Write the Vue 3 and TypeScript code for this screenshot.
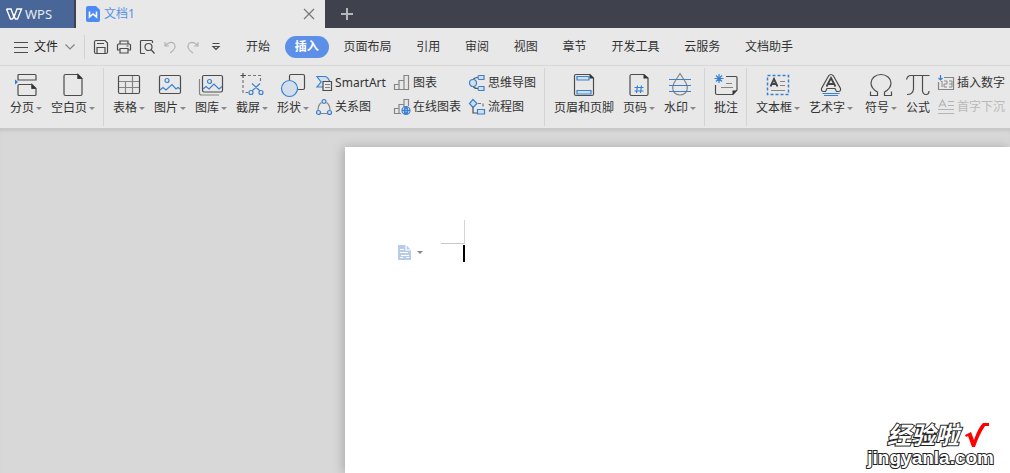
<script setup lang="ts">
import { ref } from 'vue'

interface Tool {
  id: string
  label: string
  menu?: boolean
}

const menus: string[] = ['开始', '插入', '页面布局', '引用', '审阅', '视图', '章节', '开发工具', '云服务', '文档助手']
const active = ref('插入')

const groups: { id: string; before: Tool[]; small?: Tool[][] }[] = [
  {
    id: 'pages',
    before: [
      { id: 'break', label: '分页', menu: true },
      { id: 'blank', label: '空白页', menu: true },
    ],
  },
  {
    id: 'media',
    before: [
      { id: 'table', label: '表格', menu: true },
      { id: 'picture', label: '图片', menu: true },
      { id: 'gallery', label: '图库', menu: true },
      { id: 'capture', label: '截屏', menu: true },
      { id: 'shape', label: '形状', menu: true },
    ],
    small: [
      [{ id: 'smartart', label: 'SmartArt' }, { id: 'relation', label: '关系图' }],
      [{ id: 'chart', label: '图表' }, { id: 'webchart', label: '在线图表' }],
      [{ id: 'mind', label: '思维导图' }, { id: 'flow', label: '流程图' }],
    ],
  },
  {
    id: 'header',
    before: [
      { id: 'header', label: '页眉和页脚' },
      { id: 'number', label: '页码', menu: true },
      { id: 'watermark', label: '水印', menu: true },
    ],
  },
  { id: 'comment', before: [{ id: 'comment', label: '批注' }] },
  {
    id: 'text',
    before: [
      { id: 'textbox', label: '文本框', menu: true },
      { id: 'wordart', label: '艺术字', menu: true },
      { id: 'symbol', label: '符号', menu: true },
      { id: 'formula', label: '公式' },
    ],
    small: [[{ id: 'insertnum', label: '插入数字' }, { id: 'dropcap', label: '首字下沉' }]],
  },
]

/* g: dark outline, n: light outline, b: blue outline, d: dark fill, f: blue fill, t: tinted shape */
type Part = [kind: string, d: string]
const glyphs: Record<string, Part[]> = {
  break: [
    ['g', 'M5 1.5H21Q22 1.5 22 2.5V7H4V2.5Q4 1.5 5 1.5ZM17.5 11.5H5Q4 11.5 4 12.5V21.5Q4 22.5 5 22.5H21Q22 22.5 22 21.5V15.5L18 11.5V15.5H22'],
    ['d', 'M17.5 11L22.5 15.5H17.5Z'],
    ['f', 'M1 6.5L4 9L1 11.5Z'],
  ],
  blank: [
    ['g', 'M16.5 1.5H4.5Q3 1.5 3 3V21Q3 22.5 4.5 22.5H19.5Q21 22.5 21 21V5.5L17 1.5V5.5H21'],
    ['d', 'M16.5 1L21.5 5.5H16.5Z'],
  ],
  table: [
    ['n', 'M1.5 8.5H22.5M1.5 14.5H22.5M8.5 8.5V20.5M15.5 2.5V20.5'],
    ['g', 'M3 2.5H21Q22.5 2.5 22.5 4V19Q22.5 20.5 21 20.5H3Q1.5 20.5 1.5 19V4Q1.5 2.5 3 2.5Z'],
  ],
  picture: [
    ['g', 'M3 2.5H21Q22.5 2.5 22.5 4V19Q22.5 20.5 21 20.5H3Q1.5 20.5 1.5 19V4Q1.5 2.5 3 2.5Z'],
    ['b', 'M2 17L5 14.5L8 17L14 11.5L18 16L20 14.5L22 16M9 5.5A2 2 0 1 1 9 9.5A2 2 0 1 1 9 5.5'],
  ],
  gallery: [
    ['n', 'M0.5 6V20Q0.5 22 2.5 22H20'],
    ['g', 'M5 2.5H22Q23.5 2.5 23.5 4V17Q23.5 19 22 19H5Q3.5 19 3.5 17V4Q3.5 2.5 5 2.5Z'],
    ['b', 'M4 16L7 13.5L10 16L15 11L20 16L23 13.5M10.5 6.5A2 2 0 1 1 10.5 10.5A2 2 0 1 1 10.5 6.5'],
  ],
  capture: [
    ['g', 'M0.5 2.5H6M3 0V5'],
    ['dash', 'M8 2.5H20.5V9M3 7V19.5H8'],
    ['b', 'M12 10.5L20 18M20 10.5L12 18M11 17.5A2 2 0 1 1 11 21.5A2 2 0 1 1 11 17.5M21 17.5A2 2 0 1 1 21 21.5A2 2 0 1 1 21 17.5'],
  ],
  shape: [
    ['g', 'M8.5 7V3Q8.5 1.5 10 1.5H22Q23.5 1.5 23.5 3V15Q23.5 16.500 22 16.5H17'],
    ['t', 'M8.5 7.5A8 8 0 1 1 8.5 23.5A8 8 0 1 1 8.5 7.5'],
  ],
  header: [
    ['g', 'M18 1.5H4Q2.5 1.5 2.5 3V21Q2.5 22.5 4 22.5H20Q21.5 22.5 21.5 21V5Z'],
    ['d', 'M17.5 1L22 5.5H17.5Z'],
    ['t', 'M5 3.5H17V7H5ZM5 17.5H19V21H5Z'],
  ],
  number: [
    ['g', 'M17 1.5H4.5Q3 1.5 3 3V21Q3 22.5 4.5 22.5H19.5Q21 22.5 21 21V5Z'],
    ['d', 'M16.5 1L21.5 5.5H16.5Z'],
    ['b', 'M7.5 14.5H16.5M7.5 18H16.5M10.5 12.5L9.5 20M14.5 12.5L13.5 20'],
  ],
  watermark: [
    ['n', 'M12 0.5L18 10Q20 14 19 17Q17 22 12 22Q7 22 5 17Q4 14 6 10Z'],
    ['b', 'M1 6.5H23M1 12.5H23M1 18.5H23'],
  ],
  comment: [
    ['n', 'M12 10.5H18M7 14.5H19'],
    ['g', 'M12 3.5H22Q23 3.5 23 4.5V17L19 21.5H3Q1.5 21.5 1.5 20V12'],
    ['d', 'M18.5 22V17.5H23Z'],
    ['b', 'M5 1V10M0.5 5.5H9.5M2 2.5L8 8.5M8 2.5L2 8.5'],
  ],
  textbox: [
    ['bdash', 'M1.5 2.5H22.5V21.5H1.5Z'],
    ['bold', 'M4.5 13.5L8 6L11.5 13.5M6 11H10'],
    ['n', 'M14 8.5H19M14 12.5H19M5 17.5H19'],
  ],
  wordart: [
    ['g', 'M9.5 3Q12 0 14.5 3L21.5 15.5Q22 18.5 19.5 18.5H17.5L16 15.5H8L6.5 18.5H4.5Q2 18.5 2.5 15.5Z'],
    ['bold', 'M7.5 13.5L12 5L16.5 13.5M9.5 11H14.5'],
    ['b', 'M3.5 20.5H20.5M5 22.5H19'],
  ],
  symbol: [['g', 'M1.5 18.5V22.5H8.5V19Q2 15.5 2 10A10 8.5 0 0 1 22 10Q22 15.5 15.5 19V22.5H22.5V18.5']],
  formula: [['g', 'M0.5 6.5Q1.5 2.5 5 2.5H23.5M7.5 2.5V16Q7 21.5 1 21.5M16.5 2.5V18Q17 21.5 20 21.5Q23 21.5 23 18']],
  smartart: [
    ['t', 'M1 1.5H9Q12 2 13.5 6L8 10V12H1L5 7Z'],
    ['paper', 'M7 6.5H15.5V15.5H7Z'],
    ['n', 'M9 9.5H14M9 12.5H14'],
  ],
  relation: [
    ['n', 'M5.5 3.5Q2 6 2 11M10.5 3.5Q14 6 14 11M5 14.5H11'],
    ['t', 'M8 0.5A2 2 0 1 1 8 4.5A2 2 0 1 1 8 0.5M2.5 11.5A2 2 0 1 1 2.5 15.5A2 2 0 1 1 2.5 11.5M13.5 11.5A2 2 0 1 1 13.5 15.5A2 2 0 1 1 13.5 11.5'],
  ],
  chart: [['n', 'M0.5 9.5H5V14.5H0.5ZM5 5.5H10V14.5H5ZM10 0.5H14.5V14.5H10Z']],
  webchart: [
    ['n', 'M7 14.5H0.5V9.5H5V14.5M5 9V5.5H10V8M10 5V0.5H14.5V7'],
    ['b', 'M12 7.5A4 4 0 1 1 12 15.5A4 4 0 1 1 12 7.5M8 11.5H16M12 7.5V15.5M12 7.5Q8 11.5 12 15.5M12 7.5Q16 11.5 12 15.5'],
  ],
  mind: [
    ['g', 'M4 5Q5 2.5 9 2.5M4 11Q5 13.5 9 13.5'],
    ['t', 'M4 4.5A3.5 3.5 0 1 1 4 11.5A3.5 3.5 0 1 1 4 4.5M10 0.5H15V4.5H10Q9 4.5 9 2.5Q9 0.5 10 0.5M10 11.5H15V15.5H10Q9 15.5 9 13.5Q9 11.5 10 11.5'],
  ],
  flow: [
    ['dash', 'M9 4.5H14V9'],
    ['g', 'M4 8V14H8'],
    ['t', 'M4 0.5L8 4.5L4 8.5L0.5 4.5ZM8.5 10.5H15.5V15H8.5Z'],
  ],
  insertnum: [
    ['n', 'M6 2.5H15.5V14.5H0.5V7'],
    ['thin', 'M3 7L4 6V12M6 6H9V9H6V12H9M11 6H14V12H11M11 9H14'],
    ['b', 'M2.5 0V5M0.5 3L2.5 5L4.5 3'],
  ],
  dropcap: [['faint', 'M1 8L4.5 1L8 8M2 6H7M10 2.5H16M10 6.5H16M0 10.5H16M0 14.5H16']],
}

const quick: { label: string; cls: string; d: string }[] = [
  { label: '保存', cls: 'g', d: 'M3 1.5H12L14.5 4V13Q14.5 14.5 13 14.5H3Q1.5 14.5 1.5 13V3Q1.5 1.5 3 1.5ZM4 4.5H11M4 14V8.5H12V14' },
  { label: '打印', cls: 'g', d: 'M4 5V2H12V5M4 11H1.5V6Q1.5 5 2.5 5H13.5Q14.5 5 14.5 6V11H12M4 9.5H12V14H4ZM10.5 7H12.5' },
  { label: '打印预览', cls: 'g', d: 'M6 14.5H2.5Q1.5 14.5 1.5 13.5V2.5Q1.5 1.5 2.5 1.5H12.5Q13.5 1.5 13.5 2.5V4M9.5 4.5A3.5 3.5 0 1 1 9.5 11.5A3.5 3.5 0 1 1 9.5 4.5M12 10.5L15.5 14.5' },
  { label: '撤销', cls: 'off', d: 'M3 3V7H7M3 7Q8 1.5 12 4.5Q15.5 9 8 14' },
  { label: '恢复', cls: 'off', d: 'M13 3V7H9M13 7Q8 1.5 4 4.5Q0.5 9 8 14' },
  { label: '更多', cls: 'g', d: 'M4.5 4.5H11.5M5 7.5L8 10.5L11 7.5Z' },
]
</script>

<template>
  <div class="app">
    <header class="titlebar">
      <button class="brand" type="button">
        <svg width="16" height="12" viewBox="0 0 16 12"><path d="M.5 1H5L8 9L11 1H15.5L11.5 11H9.5L6 4M.5 1L4.5 11H6.5L10 4" /></svg>
        <span>WPS</span>
      </button>
      <div class="tab">
        <svg width="14" height="16" viewBox="0 0 14 16">
          <path class="doc" d="M2 0H10L14 4V14Q14 16 12 16H2Q0 16 0 14V2Q0 0 2 0Z" />
          <path class="w" d="M3.5 5.5V11L7 8L10.5 11V5.5" />
        </svg>
        <span class="name">文档1</span>
        <button class="close" type="button" aria-label="关闭">
          <svg width="12" height="12" viewBox="0 0 12 12"><path d="M1 1L11 11M11 1L1 11" /></svg>
        </button>
      </div>
      <button class="add" type="button" aria-label="新建">
        <svg width="12" height="12" viewBox="0 0 12 12"><path d="M6 0V12M0 6H12" /></svg>
      </button>
    </header>

    <div class="menubar">
      <button class="file" type="button">
        <svg width="14" height="12" viewBox="0 0 14 12"><path class="g" d="M0 1.5H14M0 6.5H14M0 11.5H14" /></svg>
        <span>文件</span>
        <svg width="10" height="6" viewBox="0 0 10 6"><path class="n" d="M.5 .5L5 5L9.5 .5" /></svg>
      </button>
      <div class="quick">
        <button v-for="q in quick" :key="q.label" type="button" :aria-label="q.label">
          <svg width="16" height="16" viewBox="0 0 16 16"><path :class="q.cls" :d="q.d" /></svg>
        </button>
      </div>
      <nav class="menus">
        <button v-for="m in menus" :key="m" type="button" :class="{ active: m === active }" @click="active = m">{{ m }}</button>
      </nav>
    </div>

    <div class="ribbon">
      <section v-for="g in groups" :key="g.id" class="group" :class="g.id">
        <button v-for="t in g.before" :key="t.id" class="tool" :class="t.id" type="button">
          <svg width="24" height="24" viewBox="0 0 24 24">
            <path v-for="([kind, d], i) in glyphs[t.id]" :key="i" :class="kind" :d="d" />
          </svg>
          <span class="label">{{ t.label }}<i v-if="t.menu" class="caret"></i></span>
        </button>
        <div v-if="g.small" class="columns">
          <div v-for="(col, c) in g.small" :key="c" class="column">
            <button v-for="t in col" :key="t.id" class="mini" type="button" :disabled="t.id === 'dropcap'">
              <svg width="16" height="16" viewBox="0 0 16 16">
                <path v-for="([kind, d], i) in glyphs[t.id]" :key="i" :class="kind" :d="d" />
              </svg>
              <span>{{ t.label }}</span>
            </button>
          </div>
        </div>
      </section>
    </div>

    <main class="workspace">
      <article class="page">
        <button class="paragraph" type="button" aria-label="段落布局">
          <svg width="13" height="15" viewBox="0 0 13 15">
            <path class="sheet" d="M0 0H8L13 5V15H0Z" />
            <path class="lines" d="M8 0V5H13M2 4.5H6M2 7.5H10M3 10.5H11M2 12.5H5M8 12.5H11" />
          </svg>
          <i class="caret"></i>
        </button>
        <div class="margin">
          <div class="corner"></div>
          <div class="cursor"></div>
        </div>
      </article>
    </main>

    <div class="stamp">
      <div class="stamp-top">
        <span>经验啦</span>
        <svg width="24" height="24" viewBox="0 0 24 24"><path d="M0 12L6 9L9 17Q13 5 18 0H24V3H20Q14 12 10 24H7L3 13L1 14Z" /></svg>
      </div>
      <div class="stamp-url">jingyanla.com</div>
    </div>
  </div>
</template>

<style>
body {
  margin: 0;
}
</style>

<style scoped>
.app {
  position: relative;
  display: flex;
  flex-direction: column;
  min-height: 100vh;
  overflow: hidden;
  background: #d8d8d8;
  color: #333;
  font-family: "Noto Sans", "Noto Sans CJK SC", sans-serif;
  font-size: 12px;
  line-height: 16px;
}
button {
  margin: 0;
  padding: 0;
  border: 0;
  background: none;
  color: inherit;
  font: inherit;
  white-space: nowrap;
}
svg {
  display: block;
  flex: none;
  overflow: visible;
}
path {
  fill: none;
  stroke: #4c4c4c;
  stroke-width: 1.2;
}
path.n { stroke: #858585; }
path.b { stroke: #3a80d2; }
path.t { stroke: #3a80d2; fill: #d2dfeb; }
path.d { stroke: none; fill: #333; }
path.f { stroke: none; fill: #2b7bd8; }
path.dash { stroke: #777; stroke-dasharray: 3 2; }
path.bdash { stroke: #3a80d2; stroke-width: 1.5; stroke-dasharray: 3 2; }
path.bold { stroke: #444; stroke-width: 1.8; }
path.paper { fill: #e8e8e8; }
path.thin { stroke: #777; stroke-width: 0.8; }
path.faint,
path.off { stroke: #b4b4b4; }

.titlebar {
  display: flex;
  height: 28px;
  background: #3f424d;
}
.brand {
  display: flex;
  align-items: center;
  gap: 3px;
  box-sizing: border-box;
  width: 74px;
  padding-left: 6px;
  background: #486798;
  color: #e6eaf1;
  font-size: 13px;
}
.brand path {
  stroke: #fff;
  stroke-width: 1.4;
}
.tab {
  display: flex;
  align-items: center;
  box-sizing: border-box;
  width: 249px;
  margin-left: 2px;
  padding: 0 10px;
  background: #e8e8e8;
  color: #5b90e8;
}
.tab .name {
  flex: 1;
  margin-left: 4px;
}
.tab .doc { stroke: none; fill: #4c8bf2; }
.tab .w { stroke: #fff; stroke-width: 1.6; }
.close path { stroke: #777; }
.add { margin-left: 16px; }
.add path { stroke: #b5b6ba; stroke-width: 2; }

.menubar {
  display: flex;
  align-items: center;
  height: 37px;
  background: #e8e8e8;
  border-bottom: 1px solid #d8d8d8;
}
.file {
  display: flex;
  align-items: center;
  gap: 6px;
  margin-left: 14px;
  color: #222;
}
.file span { margin-right: 1px; }
.quick {
  display: flex;
  align-items: center;
  gap: 7px;
  height: 24px;
  margin-left: 9px;
  padding-left: 8px;
  border-left: 1px solid #d2d2d2;
}
.menus {
  display: flex;
  justify-content: space-between;
  width: 547px;
  margin-left: 22px;
}
.menus button {
  height: 22px;
}
.menus .active {
  margin: 0 -10px;
  padding: 0 10px;
  border-radius: 11px;
  background: #5c90e8;
  color: #fff;
  font-weight: 700;
}

.ribbon {
  display: flex;
  align-items: center;
  height: 62px;
  background: #e8e8e8;
  border-bottom: 1px solid #c8c8c8;
}
.group {
  display: flex;
  align-items: flex-start;
  gap: 9px;
  box-sizing: border-box;
  height: 58px;
  padding: 5px 8px 0 9px;
  border-right: 1px solid #d4d4d4;
}
.group.pages { padding-left: 10px; }
.group.text { border-right: 0; }
.tool {
  display: flex;
  flex-direction: column;
  align-items: center;
  gap: 3px;
}
.label {
  display: flex;
  align-items: center;
}
.caret {
  width: 0;
  height: 0;
  margin-left: 2px;
  border: 3px solid transparent;
  border-top-color: #888;
  border-bottom: 0;
}
.symbol { margin-left: 3px; }
.columns {
  display: flex;
  gap: 8px;
  margin-left: -2px;
}
.group.text .columns { margin-left: -1px; }
.column {
  display: flex;
  flex-direction: column;
  gap: 8px;
  padding-top: 2px;
}
.mini {
  display: flex;
  align-items: center;
  gap: 3px;
}
.mini:disabled { color: #b9b9b9; }

.workspace {
  display: flex;
  flex: 1;
  padding: 18px 0 0 345px;
  box-shadow: inset 0 4px 4px -3px #bdbdbd;
}
.page {
  display: flex;
  align-items: flex-start;
  flex: 1;
  padding: 73px 0 0 53px;
  background: #fff;
  box-shadow: -2px 0 10px #aaa;
}
.paragraph {
  display: flex;
  align-items: center;
  gap: 4px;
  margin-top: 25px;
}
.sheet { stroke: none; fill: #b9cbea; }
.lines { stroke: #fff; }
.margin {
  margin-left: 18px;
}
.corner {
  width: 23px;
  height: 23px;
  border-right: 1px solid #d5d5d5;
  border-bottom: 1px solid #c8c8c8;
}
.cursor {
  width: 2px;
  height: 17px;
  margin: 1px 0 0 22px;
  background: #000;
}

.stamp {
  position: absolute;
  right: 16px;
  bottom: 5px;
  color: #fff;
  font-weight: 700;
  -webkit-text-stroke: 2px #222;
  paint-order: stroke fill;
}
.stamp-top {
  display: flex;
  align-items: center;
  justify-content: flex-end;
  gap: 6px;
  padding-right: 5px;
  font-size: 24px;
  font-style: italic;
  line-height: 26px;
}
.stamp-top path { stroke: none; fill: #f00; }
.stamp-url {
  font-family: "Liberation Sans", Arial, sans-serif;
  font-size: 19px;
  line-height: 20px;
}
</style>
